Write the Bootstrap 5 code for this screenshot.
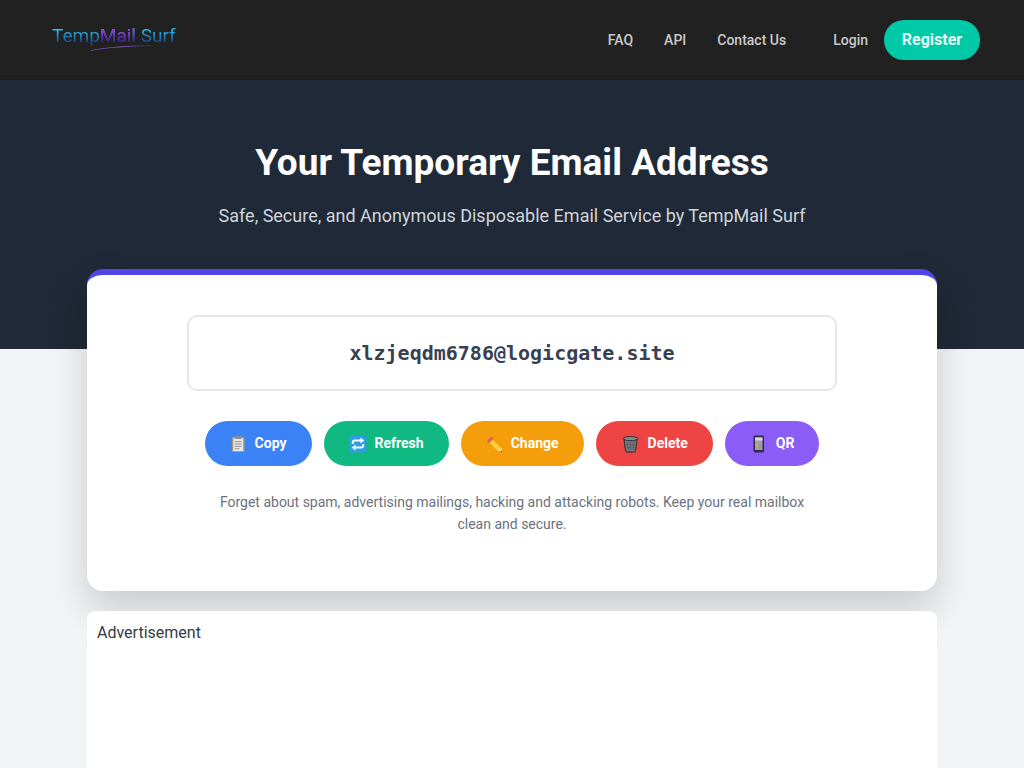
<!DOCTYPE html>
<html lang="en">
<head>
<meta charset="utf-8">
<title>TempMail Surf</title>
<link href="https://cdn.jsdelivr.net/npm/bootstrap@5.3.0/dist/css/bootstrap.min.css" rel="stylesheet">
<style>
html,body{height:768px;overflow:hidden}
body{background:#f3f4f6;font-family:Roboto,"Liberation Sans",sans-serif;color:#333b45}
.topbar{height:80px;background:#212121;border-bottom:1px solid #1c1c1c;padding:0 44px 0 52px}
.brand-logo{position:relative;display:block;width:124px;height:30px;margin-top:-8px;text-decoration:none}
.brand-text{font-size:19px;line-height:30px;font-weight:400;white-space:nowrap;background:linear-gradient(180deg,#2fc1f0 25%,#17468c 80%);-webkit-background-clip:text;background-clip:text;color:transparent}
.brand-mid{background:linear-gradient(180deg,#9a3fd8 25%,#35167f 80%);-webkit-background-clip:text;background-clip:text;color:transparent}
.brand-swoosh{position:absolute;left:36px;top:23px}
.top-link{color:#cacaca;font-size:14px;font-weight:500;text-decoration:none;line-height:20px;padding-top:1px}
.top-links{gap:31px;margin-right:47px}
.reg-btn{background:#00c9a7;color:#e9fbf7;font-weight:700;font-size:16px;border-radius:20px;height:40px;width:96px;margin-left:16px;display:flex;align-items:center;justify-content:center;text-decoration:none}
.hero{background:#1f2937;height:269px;padding-top:59px;text-align:center}
.hero-title{font-size:37px;font-weight:700;color:#fff;line-height:48px;margin:0 0 15px}
.hero-sub{font-size:18px;line-height:27px;color:#d1d5db;margin:0}
.wrap{width:850px;margin:-80px auto 0;position:relative}
.mail-card{background:#fff;border:0;border-top:6px solid #4f46e5;border-radius:16px;height:322px;padding-top:40px;box-shadow:0 20px 40px rgba(0,0,0,.17);margin-bottom:20px}
.addr-box{width:650px;height:76px;margin:0 auto 30px;border:2px solid #e5e7eb;border-radius:10px;background:#fff;font-family:"DejaVu Sans Mono","Liberation Mono",monospace;font-weight:700;font-size:20px;color:#374151;display:flex;align-items:center;justify-content:center}
.act-row{gap:12px}
.act-btn{height:45px;border-radius:22.5px;border:0;color:#fff;font-weight:700;font-size:14px;padding:0 25px;display:flex;align-items:center;gap:8px}
.act-ico{width:18px;height:18px;flex:none}
.ico-slim{width:17px}
.ico-wide{width:19px}
.bg-copy{background:#3b82f6}.bg-refresh{background:#10b981}.bg-change{background:#f59e0b}.bg-del{background:#ef4444}.bg-qr{background:#8b5cf6}
.note{width:620px;margin:25px auto 0;text-align:center;font-size:14px;line-height:22px;color:#6b7280}
.ad-card{background:#fff;border-radius:8px;height:300px;padding:10px}
</style>
</head>
<body>
<nav class="topbar d-flex align-items-center justify-content-between">
  <a class="brand-logo" href="#"><span class="brand-text">Temp<span class="brand-mid">Mail</span> Surf</span>
    <svg class="brand-swoosh" width="70" height="8" viewBox="0 0 70 8"><path d="M0 7C16 3 40 1 68 2C42 2 18 4 0 7Z" fill="#7d55b8"/></svg>
  </a>
  <div class="d-flex align-items-center">
    <div class="top-links d-flex align-items-center">
      <a class="top-link" href="#">FAQ</a>
      <a class="top-link" href="#">API</a>
      <a class="top-link" href="#">Contact Us</a>
    </div>
    <a class="top-link" href="#">Login</a>
    <a class="reg-btn" href="#">Register</a>
  </div>
</nav>
<header class="hero">
  <h1 class="hero-title">Your Temporary Email Address</h1>
  <p class="hero-sub">Safe, Secure, and Anonymous Disposable Email Service by TempMail Surf</p>
</header>
<main class="wrap">
  <section class="mail-card">
    <div class="addr-box">xlzjeqdm6786@logicgate.site</div>
    <div class="act-row d-flex justify-content-center">
      <button class="act-btn bg-copy">
        <svg class="act-ico ico-slim" viewBox="0 0 18 18"><rect x="2" y="1.5" width="13.5" height="16" rx="1" fill="#a8957c"/><rect x="3.5" y="3" width="10.5" height="13.5" fill="#e8e8e6"/><rect x="5.5" y=".5" width="6.5" height="3.2" rx=".6" fill="#8f8f8f"/><path d="M5 6.5h7.5M5 9h7.5M5 11.5h7.5M5 14h5" stroke="#8d8f92" stroke-width="1"/></svg>Copy</button>
      <button class="act-btn bg-refresh">
        <svg class="act-ico" viewBox="0 0 18 18"><rect x=".5" y=".5" width="17" height="17" rx="1.5" fill="#2f9de4"/><path d="M3.8 9V7.5A2 2 0 0 1 5.8 5.5h7" fill="none" stroke="#fff" stroke-width="2"/><path d="M11.5 2.5l3.8 3-3.8 3z" fill="#fff"/><path d="M14.2 9v1.5a2 2 0 0 1-2 2h-7" fill="none" stroke="#fff" stroke-width="2"/><path d="M6.5 9.5l-3.8 3 3.8 3z" fill="#fff"/></svg>Refresh</button>
      <button class="act-btn bg-change">
        <svg class="act-ico ico-slim" viewBox="0 0 18 18"><path d="M5 5.5L14.3 14.8" stroke="#f7d23e" stroke-width="4.6"/><path d="M4.8 1.7L1.7 4.8a1.5 1.5 0 0 0 0 2L3.2 8.3 8 3.5 6.8 1.7a1.5 1.5 0 0 0-2 0z" fill="#e8615f"/><path d="M12.6 16.4L16.4 12.6 17.6 17.6z" fill="#f1dcae"/><path d="M15.9 15.9l1.7 1.7-2.2-.5z" fill="#333"/></svg>Change</button>
      <button class="act-btn bg-del">
        <svg class="act-ico ico-wide" viewBox="0 0 18 18"><path d="M2.5 4.5h13l-1.4 11.2a1.6 1.6 0 0 1-1.6 1.3h-7a1.6 1.6 0 0 1-1.6-1.3z" fill="#70767c" stroke="#2d2f33" stroke-width="1"/><ellipse cx="9" cy="3.6" rx="7.3" ry="2.1" fill="#85898d" stroke="#2d2f33" stroke-width="1"/><path d="M5.5 7l1 8M9 7v8M12.5 7l-1 8M4.5 9.5h9M4.8 12.5h8.4" stroke="#565b60" stroke-width=".6"/></svg>Delete</button>
      <button class="act-btn bg-qr">
        <svg class="act-ico" viewBox="0 0 18 18"><rect x="3.5" y=".5" width="10.5" height="17" rx="1.4" fill="#2f2a48"/><rect x="5" y="2.5" width="7.5" height="12.5" fill="#a99aa8"/><rect x="5" y="2.5" width="7.5" height="3" fill="#d8d5dc"/><rect x="5.5" y="9.5" width="2.5" height="2.5" fill="#e2a45c"/><rect x="9" y="10" width="2.5" height="2.5" fill="#7fae7c"/></svg>QR</button>
    </div>
    <p class="note">Forget about spam, advertising mailings, hacking and attacking robots. Keep your real mailbox clean and secure.</p>
  </section>
  <section class="ad-card">Advertisement</section>
</main>
<script src="https://cdn.jsdelivr.net/npm/bootstrap@5.3.0/dist/js/bootstrap.bundle.min.js"></script>
</body>
</html>
